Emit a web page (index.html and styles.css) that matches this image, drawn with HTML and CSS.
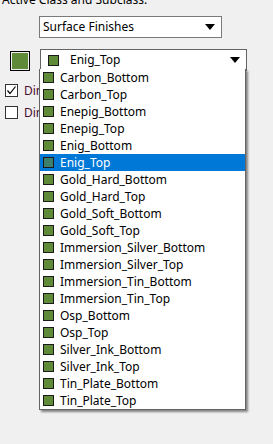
FILE: index.html
```html
<!DOCTYPE html>
<html lang="en">

<head>
    <meta charset="UTF-8">
    <title>Active Class and Subclass</title>
    <link rel="stylesheet" href="styles.css">
</head>

<body>

    <div class="panel">
        <div class="caption">Active Class and Subclass:</div>

        <!-- class -->
        <div class="row row-class">
            <div class="combo combo-class">
                <span class="combo-text">Surface Finishes</span>
                <span class="arrow"></span>
            </div>
        </div>

        <!-- subclass -->
        <div class="row row-sub">
            <div class="swatch-big"><span></span></div>
            <div class="combo combo-sub">
                <span class="chip"></span>
                <span class="combo-text sub-text">Enig_Top</span>
                <span class="arrow"></span>
            </div>
        </div>

        <div class="check-row">
            <span class="check checked">
                <svg width="11" height="11" viewBox="0 0 11 11"><path d="M1.5 5.5 L4 8.5 L9.5 1.5" fill="none" stroke="#000" stroke-width="1.2"/></svg>
            </span>
            <span class="check-label">Dimension</span>
        </div>
        <div class="check-row">
            <span class="check"></span>
            <span class="check-label">Dimension</span>
        </div>

        <!-- open list -->
        <ul class="droplist">
            <li><span class="chip"></span>Carbon_Bottom</li>
            <li><span class="chip"></span>Carbon_Top</li>
            <li><span class="chip"></span>Enepig_Bottom</li>
            <li><span class="chip"></span>Enepig_Top</li>
            <li><span class="chip"></span>Enig_Bottom</li>
            <li class="selected"><span class="chip"></span>Enig_Top</li>
            <li><span class="chip"></span>Gold_Hard_Bottom</li>
            <li><span class="chip"></span>Gold_Hard_Top</li>
            <li><span class="chip"></span>Gold_Soft_Bottom</li>
            <li><span class="chip"></span>Gold_Soft_Top</li>
            <li><span class="chip"></span>Immersion_Silver_Bottom</li>
            <li><span class="chip"></span>Immersion_Silver_Top</li>
            <li><span class="chip"></span>Immersion_Tin_Bottom</li>
            <li><span class="chip"></span>Immersion_Tin_Top</li>
            <li><span class="chip"></span>Osp_Bottom</li>
            <li><span class="chip"></span>Osp_Top</li>
            <li><span class="chip"></span>Silver_Ink_Bottom</li>
            <li><span class="chip"></span>Silver_Ink_Top</li>
            <li><span class="chip"></span>Tin_Plate_Bottom</li>
            <li><span class="chip"></span>Tin_Plate_Top</li>
        </ul>
    </div>

</body>

</html>
```

FILE: styles.css
```css
* {
    box-sizing: border-box;
}

body {
    margin: 0;
    padding: 0;
    background-color: #f0f0f0;
    font-family: 'Noto Sans', 'Open Sans', sans-serif;
    font-size: 12px;
    color: #000;
    overflow: hidden;
}

.panel {
    position: relative;
    display: flow-root;
    height: 444px;
}

.caption {
    line-height: 16px;
    margin-top: -8px;
    padding-left: 2px;
}

.row {
    display: flex;
    align-items: center;
}

.row-class {
    margin-top: 8px;
    padding-left: 39px;
}

.row-sub {
    margin-top: 11px;
    padding-left: 10px;
    align-items: flex-end;
}

.combo {
    display: flex;
    align-items: center;
    height: 22px;
    background-color: #fff;
    border: 1px solid #7a7a7a;
    padding-left: 3px;
}

.combo-class {
    width: 183px;
}

.combo-sub {
    width: 207px;
    margin-left: 10px;
    border-color: #646464;
    padding-left: 7px;
}

.combo-text {
    flex: 1;
    line-height: 18px;
}

.sub-text {
    padding-left: 11px;
}

.arrow {
    width: 0;
    height: 0;
    border-left: 5px solid transparent;
    border-right: 5px solid transparent;
    border-top: 6px solid #000;
    margin-right: 6px;
}

.swatch-big {
    width: 20px;
    height: 20px;
    border: 1px solid #000;
    padding: 1px;
    background-color: #f0f0f0;
}

.swatch-big span {
    display: block;
    width: 100%;
    height: 100%;
    background-color: #5f8a37;
}

.chip {
    display: inline-block;
    width: 11px;
    height: 11px;
    border: 1px solid #1a1a1a;
    background-color: #5f8a37;
    flex: none;
}

.check-row {
    display: flex;
    align-items: center;
    gap: 6px;
    padding-left: 5px;
    height: 22px;
}

.row-sub + .check-row {
    margin-top: 8px;
}

.check {
    width: 13px;
    height: 13px;
    border: 1px solid #333;
    background-color: #fff;
    display: flex;
    align-items: center;
    justify-content: center;
}

.check-label {
    color: #4a0d2e;
}

.droplist {
    position: absolute;
    left: 39px;
    top: 69px;
    width: 207px;
    margin: 0;
    padding: 0;
    list-style: none;
    background-color: #fff;
    border: 1px solid #646464;
    border-top: none;
    box-shadow: 2px 2px 2px rgba(0, 0, 0, 0.45);
}

.droplist li {
    display: flex;
    align-items: center;
    height: 17px;
    padding-left: 3px;
    gap: 6px;
    white-space: nowrap;
}

.droplist li.selected {
    background-color: #0078d7;
    color: #fff;
}

.droplist li.selected .chip {
    background-color: #3e7f6c;
}
```
